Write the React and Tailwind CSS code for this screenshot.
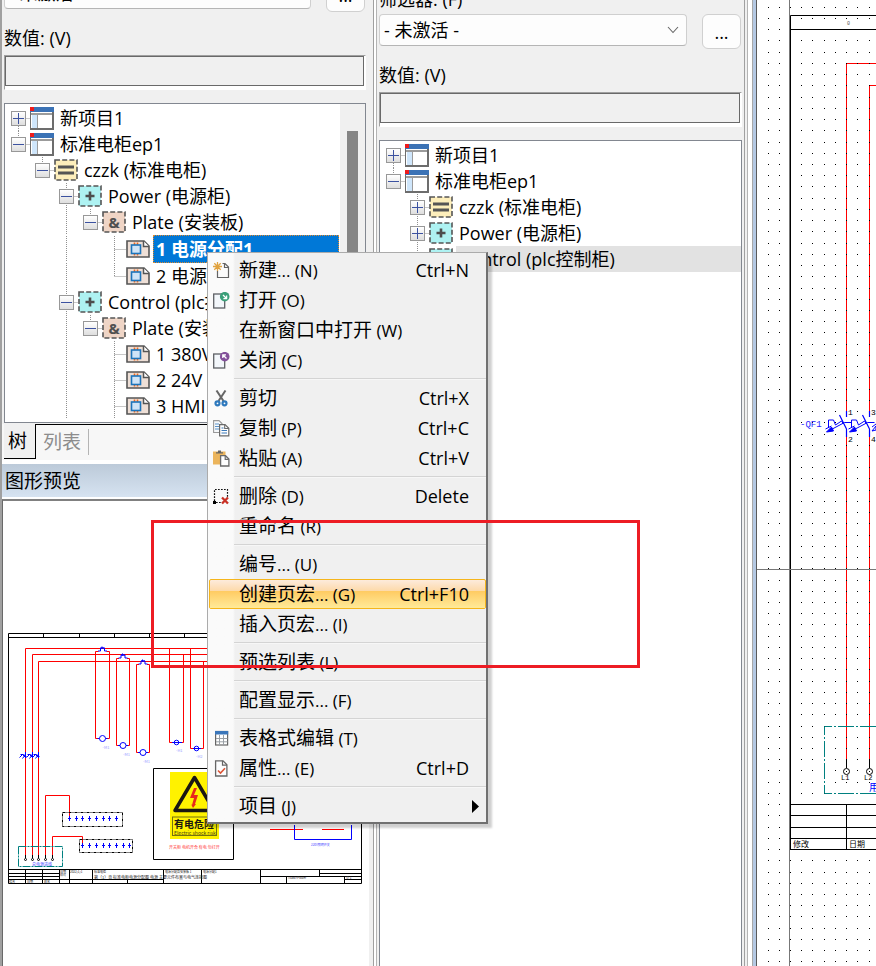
import React from "react";

/* ---------- icons ---------- */

function ProjectIcon() {
  return (
    <svg viewBox="0 0 24 23" className="h-[23px] w-6 shrink-0">
      <rect x="0.5" y="4" width="23" height="18.5" fill="#fff" stroke="#6d6d6d" />
      <rect x="22" y="4" width="2" height="19" fill="#6d6d6d" />
      <rect x="0" y="21" width="24" height="2" fill="#6d6d6d" />
      <rect x="1" y="6" width="21" height="2" fill="#9b9b9b" />
      <rect x="2" y="8" width="5" height="13" fill="#cfe6fb" />
      <rect x="7" y="8" width="1" height="13" fill="#9b9b9b" />
      <rect x="0" y="0" width="24" height="5" fill="#3b72b5" />
      <rect x="0" y="0" width="4" height="4" fill="#ee1c1c" />
    </svg>
  );
}

function DashedBox({ fill, children }) {
  return (
    <svg viewBox="0 0 24 22" className="h-[22px] w-6 shrink-0">
      <rect x="1" y="1" width="22" height="20" fill={fill} stroke="#555" strokeWidth="1.6" strokeDasharray="5 2.2" />
      {children}
    </svg>
  );
}

function StructureIcon() {
  return (
    <DashedBox fill="#fdeebb">
      <path d="M4 8h16M4 14h16" stroke="#555" strokeWidth="3" />
    </DashedBox>
  );
}

function PlaceIcon() {
  return (
    <DashedBox fill="#aef2f2">
      <path d="M12 6.500v9M7.500 11h9" stroke="#4d4d4d" strokeWidth="2.6" />
    </DashedBox>
  );
}

function PlateIcon() {
  return (
    <DashedBox fill="#efd5c6">
      <text x="12" y="16.500" textAnchor="middle" fontSize="15" fontWeight="700" fill="#505050" fontFamily="Open Sans, sans-serif">&amp;</text>
    </DashedBox>
  );
}

function PageIcon() {
  return (
    <svg viewBox="0 0 24 18" className="h-[18px] w-6 shrink-0">
      <path d="M1 1H18L23 6V17H1Z" fill="#eedfd6" stroke="#555" strokeWidth="1.6" />
      <path d="M17.500 1V6.500H23" fill="#fff" stroke="#555" strokeWidth="1.5" />
      <path d="M8.500 2.500v13M11.500 2.500v13" stroke="#ee6a1f" strokeWidth="1.6" />
      <rect x="5.500" y="5" width="9" height="8.500" fill="#cfe4f7" stroke="#1c74bb" strokeWidth="1.6" />
    </svg>
  );
}

function MenuSvg({ children }) {
  return (
    <svg viewBox="0 0 17 17" className="size-[17px]" fill="none">
      {children}
    </svg>
  );
}

function NewIcon() {
  return (
    <MenuSvg>
      <path d="M5 1.500h7L15.500 5v10.500H4.500V8" fill="#fbfbfb" />
      <path d="M9.500 1.500H12L15.500 5v10.500H4.500V9M11.500 1.500V5.500H15.500" stroke="#636363" strokeWidth="1.2" />
      <path d="M4.500 0v9M0 4.500h9M1.300 1.300l6.400 6.400M7.700 1.300L1.300 7.700" stroke="#e0a23f" strokeWidth="1.3" />
    </MenuSvg>
  );
}

function DocDotIcon({ color, back }) {
  return (
    <MenuSvg>
      <rect x="0.700" y="2" width="11" height="14" fill="#f3f7fb" stroke="#5d6065" strokeWidth="1.3" />
      <circle cx="11.700" cy="4.700" r="4.800" fill={color} />
      {back ? (
        <path d="M13.500 6.500L10 3M9.800 6V2.800H13" stroke="#fff" strokeWidth="1.300" />
      ) : (
        <path d="M10 3l3.500 3.500M13.600 3.400V6.600H10.400" stroke="#fff" strokeWidth="1.300" />
      )}
    </MenuSvg>
  );
}

function CutIcon() {
  return (
    <MenuSvg>
      <path d="M3.500 0.500L10.500 11M12.500 0.500L5.500 11" stroke="#666" strokeWidth="2" />
      <circle cx="4.500" cy="13.300" r="2" stroke="#2e79bd" strokeWidth="2.200" />
      <circle cx="11.500" cy="13.300" r="2" stroke="#2e79bd" strokeWidth="2.200" />
    </MenuSvg>
  );
}

function CopyIcon() {
  return (
    <MenuSvg>
      <path d="M0.600 0.600H6L9 3.500V12.500H0.600Z" fill="#f7f9fb" stroke="#999" strokeWidth="1.100" />
      <path d="M2 4h4M2 6.500h4M2 9h4" stroke="#5b93c9" />
      <path d="M6.600 4.600H12L15.800 8.200V15.900H6.600Z" fill="#fff" stroke="#6a6a6a" strokeWidth="1.200" />
      <path d="M11.700 4.600V8.500H15.800" stroke="#6a6a6a" strokeWidth="1.100" />
      <path d="M8.500 8h2M8.500 10.500h5.500M8.500 13h5.500" stroke="#3b79b9" strokeWidth="1.200" />
    </MenuSvg>
  );
}

function PasteIcon() {
  return (
    <MenuSvg>
      <rect x="0" y="1.500" width="12.500" height="13" fill="#ecb55c" />
      <path d="M3 2.200h2V0.500h3V2.200h2v1.300H3Z" fill="#666" />
      <path d="M7.600 5.700H12.500L15.900 9V16H7.600Z" fill="#fff" stroke="#6a6a6a" strokeWidth="1.300" />
      <path d="M12.200 5.700V9.300H15.900" stroke="#6a6a6a" strokeWidth="1.200" />
    </MenuSvg>
  );
}

function DeleteIcon() {
  return (
    <MenuSvg>
      <path d="M1.500 13V1.500H14.500V9M3 14.500H8" stroke="#111" strokeWidth="1.200" strokeDasharray="1.700 1.300" />
      <rect x="0" y="13" width="3" height="3" fill="#000" />
      <path d="M9 9.500l6 6M15 9.500l-6 6" stroke="#c93125" strokeWidth="2.300" />
    </MenuSvg>
  );
}

function TableIcon() {
  return (
    <MenuSvg>
      <rect x="2.600" y="1.500" width="12" height="13.500" fill="#fff" stroke="#666" strokeWidth="1.200" />
      <path d="M6.500 5v10M10.500 5v10M3 8.500h11.500M3 11.800h11.500" stroke="#9aa0a6" />
      <rect x="2" y="1" width="13.200" height="3.500" fill="#3a76ba" />
    </MenuSvg>
  );
}

function PropertiesIcon() {
  return (
    <MenuSvg>
      <path d="M2.600 0.800H10L13.900 4.700V16H2.600Z" fill="#fcfdfe" stroke="#666" strokeWidth="1.300" />
      <path d="M9.500 0.800V5.200H13.900" stroke="#666" strokeWidth="1.200" />
      <path d="M5 10.500L7.500 13L12 8.300" stroke="#dc5436" strokeWidth="1.600" />
    </MenuSvg>
  );
}

/* ---------- tree ---------- */

const ICONS = {
  project: ProjectIcon,
  structure: StructureIcon,
  place: PlaceIcon,
  plate: PlateIcon,
  page: PageIcon,
};

const PATHS = {
  all: "M12.500 0V26",
  top: "M12.500 0V13",
  bottom: "M12.500 13V26",
  none: "",
};

function Guide({ line = "none", arm, exp, label }) {
  return (
    <span className="grid h-full w-6 shrink-0 items-center">
      <svg viewBox="0 0 24 26" className="col-start-1 row-start-1 h-[26px] w-6">
        <path d={PATHS[line] + (arm ? "M12.500 13.500H24" : "")} stroke="#909090" strokeDasharray="1 1" fill="none" />
      </svg>
      {exp && (
        <button
          type="button"
          aria-label={label}
          className="z-0 col-start-1 row-start-1 ml-[5px] grid size-[15px] place-items-center border border-[#989898] bg-linear-to-b from-white to-[#dedede]"
        >
          <svg viewBox="0 0 13 13" className="size-[13px]">
            <path d={exp === "+" ? "M1 6.500H12M6.500 1V12" : "M1 6.500H12"} stroke="#3c52a0" />
          </svg>
        </button>
      )}
    </span>
  );
}

function TreeRow({ level, guides = [], line, exp, icon, text, selected, marked }) {
  const Icon = ICONS[icon];
  return (
    <li className={`flex items-center whitespace-nowrap pl-px ${selected ? "h-7" : "h-[26px]"}`}>
      {Array.from({ length: level }, (_, i) => (
        <Guide key={i} line={guides.includes(i) ? "all" : "none"} />
      ))}
      <Guide line={line} arm exp={exp} label={text} />
      <Icon />
      {selected ? (
        <span className="ml-[3px] flex h-full w-[186px] shrink-0 items-center border border-dotted border-[#e08a2e] bg-[#0078d7] pl-[2px] font-bold text-white">
          {text}
        </span>
      ) : (
        <span className={`flex h-full items-center ${marked ? "ml-[3px] flex-1 bg-[#e2e2e2] pl-[3px]" : "ml-1.5"}`}>{text}</span>
      )}
    </li>
  );
}

const LEFT_TREE = [
  { level: 0, line: "bottom", exp: "+", icon: "project", text: "新项目1" },
  { level: 0, line: "top", exp: "-", icon: "project", text: "标准电柜ep1" },
  { level: 1, line: "top", exp: "-", icon: "structure", text: "czzk (标准电柜)" },
  { level: 2, line: "all", exp: "-", icon: "place", text: "Power (电源柜)" },
  { level: 3, guides: [2], line: "top", exp: "-", icon: "plate", text: "Plate (安装板)" },
  { level: 4, guides: [2], line: "all", icon: "page", text: "1 电源分配1", selected: true },
  { level: 4, guides: [2], line: "top", icon: "page", text: "2 电源分配2" },
  { level: 2, line: "all", exp: "-", icon: "place", text: "Control (plc控制柜)" },
  { level: 3, guides: [2], line: "top", exp: "-", icon: "plate", text: "Plate (安装板)" },
  { level: 4, guides: [2], line: "all", icon: "page", text: "1 380V" },
  { level: 4, guides: [2], line: "all", icon: "page", text: "2 24V" },
  { level: 4, guides: [2], line: "all", icon: "page", text: "3 HMI" },
];

const RIGHT_TREE = [
  { level: 0, line: "bottom", exp: "+", icon: "project", text: "新项目1" },
  { level: 0, line: "top", exp: "-", icon: "project", text: "标准电柜ep1" },
  { level: 1, line: "all", exp: "+", icon: "structure", text: "czzk (标准电柜)" },
  { level: 1, line: "all", exp: "+", icon: "place", text: "Power (电源柜)" },
  { level: 1, line: "top", exp: "+", icon: "place", text: "Control (plc控制柜)", marked: true },
];

function Tree({ rows }) {
  return (
    <ul className="min-w-0 flex-1 overflow-hidden pt-px">
      {rows.map((row, i) => (
        <TreeRow key={i} {...row} />
      ))}
    </ul>
  );
}

function FilterForm({ id }) {
  return (
    <>
      <label htmlFor={id + "-filter"} className="flex h-7 shrink-0 items-center">筛选器: (F)</label>
      <div className="flex h-9 shrink-0 justify-between gap-[15px] pt-px pr-px">
        <div className="grid h-8 flex-1 items-center">
          <select
            id={id + "-filter"}
            className="col-start-1 row-start-1 h-8 w-full appearance-none rounded-sm border border-[#cfcfcf] border-b-[#b5b5b5] bg-[#fdfdfd] px-1"
          >
            <option>- 未激活 -</option>
          </select>
          <svg viewBox="0 0 12 8" className="pointer-events-none col-start-1 row-start-1 mr-2 h-2 w-3 justify-self-end">
            <path d="M1 1l5 5.500L11 1" fill="none" stroke="#666" strokeWidth="1.100" />
          </svg>
        </div>
        <button type="button" className="flex h-[35px] w-[39px] items-center justify-center rounded-md border border-[#d0d0d0] bg-[#fdfdfd]">
          ...
        </button>
      </div>
      <label htmlFor={id + "-value"} className="mt-3.5 flex h-6 shrink-0 items-center">数值: (V)</label>
      <div className="mt-[5px] h-[35px] shrink-0 border border-white border-t-[#a0a0a0] border-l-[#a0a0a0] bg-white pr-px pb-[3px]">
        <input id={id + "-value"} type="text" className="block h-full w-full border border-[#696969] bg-[#f0f0f0] px-1" />
      </div>
    </>
  );
}

/* ---------- page preview ---------- */

function Motor({ x1, x2, y1, y2 }) {
  const c = (x1 + x2) / 2;
  return (
    <g>
      <path d={`M${c - 4} ${y1}H${x1}V${y2}H${x2}V${y1}H${c + 4}`} stroke="#f00" />
      <path d={`M${c - 4.5} ${y1 - 0.5}h2.500v-3h4v3h2.500M${c - 2} ${y1 - 3.5}h4M${c - 0.5} ${y1 - 5}v2M${c - 5} ${y2}h10`} stroke="#00f" />
      <circle cx={c} cy={y2} r="3" fill="#fff" stroke="#00f" />
      <text x={c} y={y2 + 10} fontSize="4" fill="#9a9aff">-M1</text>
    </g>
  );
}

const ROW_A = [69, 76, 82, 89, 96, 103, 109, 116];
const ROW_B = [82, 89, 96, 103, 109, 116, 123, 129];

function Preview() {
  return (
    <svg viewBox="3 625 361 265" className="mt-[124px] h-auto w-[361px] max-w-full" fill="none" fontFamily="Noto Sans CJK SC, sans-serif">
      <g stroke="#000">
        <path d="M8.500 633.500H361.500V883.500H8.500ZM8.500 637.500H361.500M43.500 634v3M79.500 634v3M114.500 634v3M149.500 634v3M184.500 634v3" />
        <path d="M8.500 869.500H361.500M8.500 873.500H59.500M8.500 876.500H59.500M8.500 879.500H92.500M59.500 869V883M69.500 869V883M92.500 869V883M42.500 869V883M25.500 869V883M92.500 879.500H163.500M127.500 879V883M163.500 869V883M201.500 869V883M260.500 869V883M260.500 876.500H361.500M286.500 876V883M319.500 869V876M319.500 873.500H361M344.500 876V883M344.500 879.500H361" />
      </g>
      <g stroke="#f00">
        <path d="M25.500 858V648.500H361M32.500 858V654.500H361M38.500 858V661.500H361" />
        <path d="M169.500 648V742.500H183.500V654M190.500 648V748.500H203.500V661" />
        <path d="M45.500 858V795.500H69.500V818M52.500 858V836.500H82.500V845M270 829.500H303M322 829.500H344" />
      </g>
      <Motor x1={95.5} x2={109.5} y1={651.5} y2={738.5} />
      <Motor x1={116.5} x2={129.5} y1={658.5} y2={745.5} />
      <Motor x1={136.5} x2={149.5} y1={664.5} y2={752.5} />
      <g stroke="#00f">
        <path d="M172 742.500h10M193 748.500h8" />
        <circle cx="176.500" cy="742.500" r="2.300" />
        <circle cx="196.500" cy="748.500" r="2.300" />
        {[25.5, 32.5, 38.5].map((x) => (
          <path key={x} d={`M${x} 752v6M${x - 6} 757.500l3-3 3 3M${x - 5} 754.500h3l3 2M${x - 3} 758.500l3-4`} />
        ))}
        <path d="M294.500 825V839.500H351.500V825" />
        {ROW_A.map((x) => (
          <path key={x} d={`M${x + 0.5} 816v5M${x - 1} 818.500h3M${x} 819.500h1`} />
        ))}
        {ROW_B.map((x) => (
          <path key={x} d={`M${x + 0.5} 843v5M${x - 1} 845.500h3M${x} 846.500h1`} />
        ))}
      </g>
      <path d="M62.500 812.500H122.500V826.500H62.500ZM79.500 839.500H132.500V852.500H79.500Z" stroke="#000" strokeDasharray="3 1 1 1" />
      <path d="M18.500 846.500H62.500V866.500H18.500Z" stroke="#008080" strokeDasharray="8 1 2 1" />
      {[25.5, 32.5, 38.5, 45.5, 52.5].map((x) => (
        <g key={x} stroke="#000">
          <path d={`M${x} 855v3`} />
          <circle cx={x} cy="859.500" r="1" />
        </g>
      ))}
      <path d="M153.500 768.500H233.500V859.500H153.500Z" fill="#fff" stroke="#000" />
      <rect x="170" y="772" width="49" height="67" fill="#fff200" />
      <path d="M194.500 777.500L214 810.500H175Z" stroke="#1a1712" strokeWidth="3.500" strokeLinejoin="round" />
      <path d="M194 788l-4 10h4l-2 7-1-1 2 4 3-4-1 0 3-9h-4l3-7Z" fill="#e8281c" />
      <rect x="172.500" y="817" width="44" height="18.500" stroke="#75720f" />
      <text x="174" y="827.500" fontSize="10" fontWeight="700" fill="#1a1712">有电危险</text>
      <text x="174" y="834.500" fontSize="5" fill="#444010">Electric shock risk</text>
      <text x="169" y="848.500" fontSize="4" fill="#f33">开关柜 电机开合 有电 勿打开</text>
      <g fontSize="4" fill="#4444ff">
        <text x="32" y="866">总电源进线</text>
        <text x="311" y="846" fontSize="3">220V照明开关</text>
        <text x="176" y="752" fill="#9a9aff">-H1</text>
        <text x="196" y="758" fill="#9a9aff">-H2</text>
      </g>
      <g fontSize="3" fill="#222">
        <text x="9" y="882.500">修改</text>
        <text x="27" y="882.500">日期</text>
        <text x="44" y="882.500">姓名</text>
        <text x="60" y="872.500">日期</text>
        <text x="60" y="876">校对</text>
        <text x="70" y="872.500">2022/1/1</text>
        <text x="94" y="873">标准电柜</text>
        <text x="94" y="878.500" fontSize="4">第（1）页 标准电柜电源分配图 电源 主要元件布置与电气连接图</text>
        <text x="165" y="873">电源分配及安装板 1</text>
        <text x="203" y="873">电源分配1</text>
        <text x="288" y="879">=czzk+Power</text>
        <text x="346" y="879">页 1</text>
      </g>
    </svg>
  );
}

/* ---------- schematic canvas ---------- */

function dots() {
  let d = "";
  for (let i = 0; i < 10; i++)
    for (let j = 0; j < 86; j++)
      d += `M${Math.floor(768 + i * 11.23)} ${Math.floor(7.3 + j * 11.23)}h1v1h-1z`;
  return d;
}

function Breaker({ x, top, bottom }) {
  return (
    <g>
      <g stroke="#00f">
        <path d={`M${x} 411v6M${x} 429v8M${x - 7} 415l7 14`} strokeWidth="1.200" />
        <path d={`M${x + 5} 422.500h-7L${x - 18} 431M${x - 18} 427v-7h5l2 5 6-4 2 3M${x - 21} 429l6-3`} />
        <path d={`M${x - 20} 432l5-5 2 4Z`} fill="#00f" />
      </g>
      <g fontSize="8" fill="#000">
        <text x={x + 1.5} y="415">{top}</text>
        <text x={x + 1.5} y="442">{bottom}</text>
      </g>
    </g>
  );
}

function Schematic() {
  return (
    <svg viewBox="757 0 119 966" className="h-[966px] w-[119px]" fill="none" fontFamily="Liberation Mono, Noto Sans CJK SC, monospace">
      <path d="M789.500 0V966" stroke="#777" />
      <path d="M876 15.500H790.500V849.500H876M790.500 29.500H876M790.500 804.500H876M790.500 815.500H876M790.500 827.500H876M790.500 838.500H876M846.500 804V849" stroke="#000" />
      <text x="847" y="25" fontSize="5" fill="#555">0</text>
      <path d="M846.500 760V63.500H876M869.500 760V85.500H876" stroke="#f00" />
      <path d={dots()} fill="#000" />
      <path d="M846.500 411V437M869.500 411V437" stroke="#fff" />
      <Breaker x={846.5} top="1" bottom="2" />
      <Breaker x={869.5} top="3" bottom="4" />
      <path d="M872 427l4-3M872 431l4-5v4Z" stroke="#00f" />
      <text x="800" y="427" fontSize="9" fill="#22f">-QF1</text>
      <path d="M757 569.500H876" stroke="#777" />
      <path d="M876 726.500H824.500V793.500H876" stroke="#008080" strokeDasharray="16 2 2 2" />
      <path d="M846.500 759v9M869.500 759v9" stroke="#000" />
      <circle cx="846.500" cy="771.500" r="3" fill="#fff" stroke="#000" />
      <circle cx="869.500" cy="771.500" r="3" fill="#fff" stroke="#000" />
      <path d="M846 771h1v1h-1zM869 771h1v1h-1z" fill="#000" />
      <g fontSize="7" fill="#000">
        <text x="841" y="780">L1</text>
        <text x="864" y="780">L2</text>
        <text x="793" y="847" fontSize="8">修改</text>
        <text x="849" y="847" fontSize="8">日期</text>
      </g>
      <text x="869" y="791" fontSize="10" fill="#00f">用</text>
    </svg>
  );
}

/* ---------- context menu ---------- */

const MENU = [
  [
    { icon: <NewIcon />, text: "新建", mnemonic: "... (N)", short: "Ctrl+N" },
    { icon: <DocDotIcon color="#3a9f78" />, text: "打开", mnemonic: " (O)" },
    { text: "在新窗口中打开", mnemonic: " (W)" },
    { icon: <DocDotIcon color="#83509a" back />, text: "关闭", mnemonic: " (C)" },
  ],
  [
    { icon: <CutIcon />, text: "剪切", mnemonic: "", short: "Ctrl+X" },
    { icon: <CopyIcon />, text: "复制", mnemonic: " (P)", short: "Ctrl+C" },
    { icon: <PasteIcon />, text: "粘贴", mnemonic: " (A)", short: "Ctrl+V" },
  ],
  [
    { icon: <DeleteIcon />, text: "删除", mnemonic: " (D)", short: "Delete" },
    { text: "重命名", mnemonic: " (R)" },
  ],
  [
    { text: "编号", mnemonic: "... (U)" },
    { text: "创建页宏", mnemonic: "... (G)", short: "Ctrl+F10", active: true },
    { text: "插入页宏", mnemonic: "... (I)" },
  ],
  [{ text: "预选列表", mnemonic: " (L)" }],
  [{ text: "配置显示", mnemonic: "... (F)" }],
  [
    { icon: <TableIcon />, text: "表格式编辑", mnemonic: " (T)" },
    { icon: <PropertiesIcon />, text: "属性", mnemonic: "... (E)", short: "Ctrl+D" },
  ],
  [{ text: "项目", mnemonic: " (J)", sub: true }],
];

function MenuItem({ icon, text, mnemonic, short, active, sub }) {
  return (
    <button
      type="button"
      role="menuitem"
      className={`flex h-[30px] w-full items-center border text-left whitespace-pre ${
        active
          ? "rounded-xs border-[#f5b51c] bg-linear-to-b from-[#fdebdc] from-0% via-[#fdd9a8] via-40% to-[#fdd9a8] to-40%"
          : "border-transparent"
      }`}
    >
      <span
        className={`flex h-full w-full items-center ${
          active ? "bg-linear-to-b from-transparent from-40% via-[#ffcb62] via-40% to-[#ffea98] to-100%" : ""
        }`}
      >
        <span className="w-[29px] shrink-0 pl-[3px]">{icon}</span>
        <span className="flex-1 text-[19px]">
          {text}
          <span className="text-[17px]">{mnemonic}</span>
        </span>
        {short && <span className="pr-4 text-[18px]">{short}</span>}
        {sub && (
          <svg viewBox="0 0 7 13" className="mr-1.5 h-[13px] w-[7px]">
            <path d="M0 0L7 6.500L0 13Z" fill="#000" />
          </svg>
        )}
      </span>
    </button>
  );
}

function ContextMenu() {
  return (
    <div
      role="menu"
      className="absolute top-[252px] left-[207px] w-[281px] border border-r-2 border-b-2 border-[#ababab] border-r-[#707070] border-b-[#707070] bg-linear-to-r from-[#fafafa] from-[25px] to-[#f0f0f0] to-[27px] pt-[2px] pl-px pb-px shadow-[4px_4px_2px_#00000030]"
    >
      {MENU.map((group, i) => (
        <div key={i}>
          {i > 0 && <div role="separator" className="my-[3px] ml-[25px] h-[2px] border-t border-[#d4d4d4] bg-[#f7f7f7]" />}
          {group.map((item) => (
            <MenuItem key={item.text} {...item} />
          ))}
        </div>
      ))}
    </div>
  );
}

/* ---------- window ---------- */

export default function App() {
  return (
    <div className="relative flex h-screen overflow-hidden bg-[#f0f0f0] font-['Open_Sans','Noto_Sans_CJK_SC',sans-serif] text-[18px] leading-none text-black">
      <section className="flex w-[369px] shrink-0 flex-col border-l-2 border-[#a0a0a0]">
        <div className="-mt-[52px] flex flex-col pr-[3px] pl-[2px]">
          <FilterForm id="pages" />
          <div className="mt-[13px] flex h-80 overflow-hidden border border-[#828790] bg-white">
            <Tree rows={LEFT_TREE} />
            <div className="flex w-[25px] justify-start bg-[#f0f0f0] pt-[27px] pl-[7px]">
              <div className="h-40 w-[11px] bg-[#858585]" />
            </div>
          </div>
        </div>
        <div role="tablist" className="mt-px flex h-9 shrink-0 items-start bg-[#f7f7f7] pl-[2px] text-[19px]">
          <button type="button" role="tab" aria-selected="true" className="h-[35px] w-8 border-r border-b border-black bg-[#f0f0f0] pr-1">
            树
          </button>
          <div className="flex h-full flex-1 items-start border-t border-black">
            <button type="button" role="tab" aria-selected="false" className="mt-1 h-[26px] w-[53px] border-r border-[#b4b4b4] text-[#8c8c8c]">
              列表
            </button>
          </div>
        </div>
        <div className="h-1 shrink-0 bg-white" />
        <h2 className="flex h-[33px] shrink-0 items-center bg-linear-to-b from-[#bccad9] to-[#d6e3f1] pt-0.5 pl-[3px] text-[19px]">图形预览</h2>
        <div className="h-[2px] shrink-0 bg-white" />
        <div className="flex-1 border-t-2 border-l border-[#696969] border-t-[#808080] bg-white">
          <Preview />
        </div>
      </section>

      <div className="w-2 shrink-0 border-r border-l-4 border-[#b4b4b4] border-l-[#f0f0f0] bg-white">
        <div className="h-full w-px bg-[#a0a0a0]" />
      </div>

      <section className="flex w-[368px] shrink-0 flex-col border-r border-[#a0a0a0] pr-[2px] pl-[2px]">
        <div className="-mt-[15px] flex flex-1 flex-col">
          <FilterForm id="macros" />
          <div className="mt-[13px] flex flex-1 border border-b-0 border-[#828790] bg-white">
            <Tree rows={RIGHT_TREE} />
          </div>
        </div>
      </section>

      <div className="flex w-3 shrink-0">
        <div className="w-[3px] border-r border-[#b4b4b4]" />
        <div className="flex-1 bg-white" />
        <div className="w-[5px] border-r border-l border-[#5a5a5a] border-l-[#a8a8a8] bg-[#b5c9e3]" />
      </div>

      <main className="min-w-0 flex-1 overflow-hidden bg-white">
        <Schematic />
      </main>

      <ContextMenu />
      <div className="pointer-events-none absolute top-[520px] left-[151px] h-[148px] w-[489px] border-3 border-[#ed1c24]" />
    </div>
  );
}
